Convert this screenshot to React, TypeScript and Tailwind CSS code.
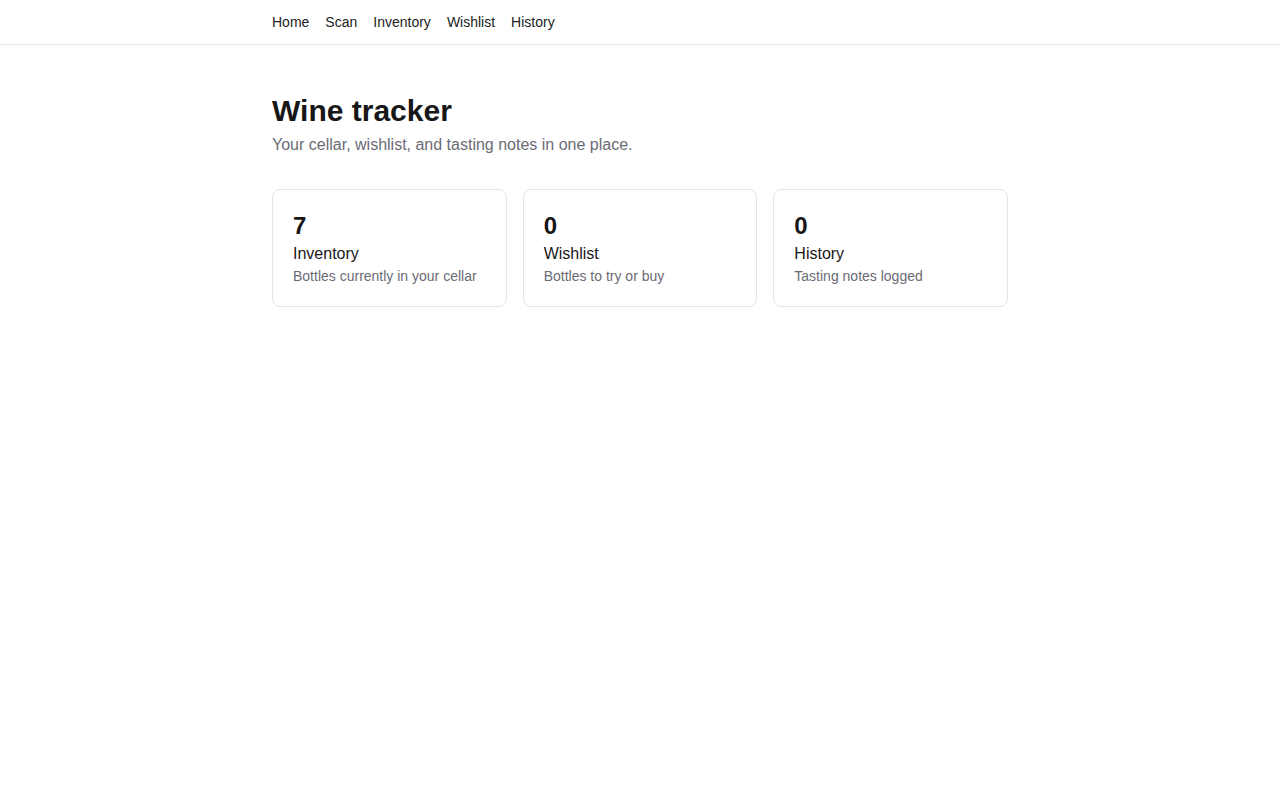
const stats = [
  { count: 7, label: 'Inventory', note: 'Bottles currently in your cellar' },
  { count: 0, label: 'Wishlist', note: 'Bottles to try or buy' },
  { count: 0, label: 'History', note: 'Tasting notes logged' },
];

const links = ['Home', 'Scan', 'Inventory', 'Wishlist', 'History'];

export default function App() {
  return (
    <div className="min-h-screen bg-white text-[#171717] font-['Liberation_Sans',Arial,sans-serif]">
      <nav className="h-[45px] border-b border-[#e5e5e5]">
        <div className="mx-auto flex h-[44px] max-w-[736px] items-center gap-4 text-sm text-[#222]">
          {links.map((l) => (
            <a key={l} href="#" className="hover:underline">
              {l}
            </a>
          ))}
        </div>
      </nav>

      <main className="mx-auto max-w-[736px] pt-12">
        <h1 className="text-[30px] font-bold leading-9">Wine tracker</h1>
        <p className="mt-1 text-base text-[#6b6b76]">Your cellar, wishlist, and tasting notes in one place.</p>

        <div className="mt-8 grid grid-cols-3 gap-4">
          {stats.map((s) => (
            <div key={s.label} className="rounded-lg border border-[#e5e5e5] p-5">
              <div className="text-2xl font-bold leading-8">{s.count}</div>
              <div className="text-base leading-6">{s.label}</div>
              <div className="text-sm leading-5 text-[#6b6b76]">{s.note}</div>
            </div>
          ))}
        </div>
      </main>
    </div>
  );
}
